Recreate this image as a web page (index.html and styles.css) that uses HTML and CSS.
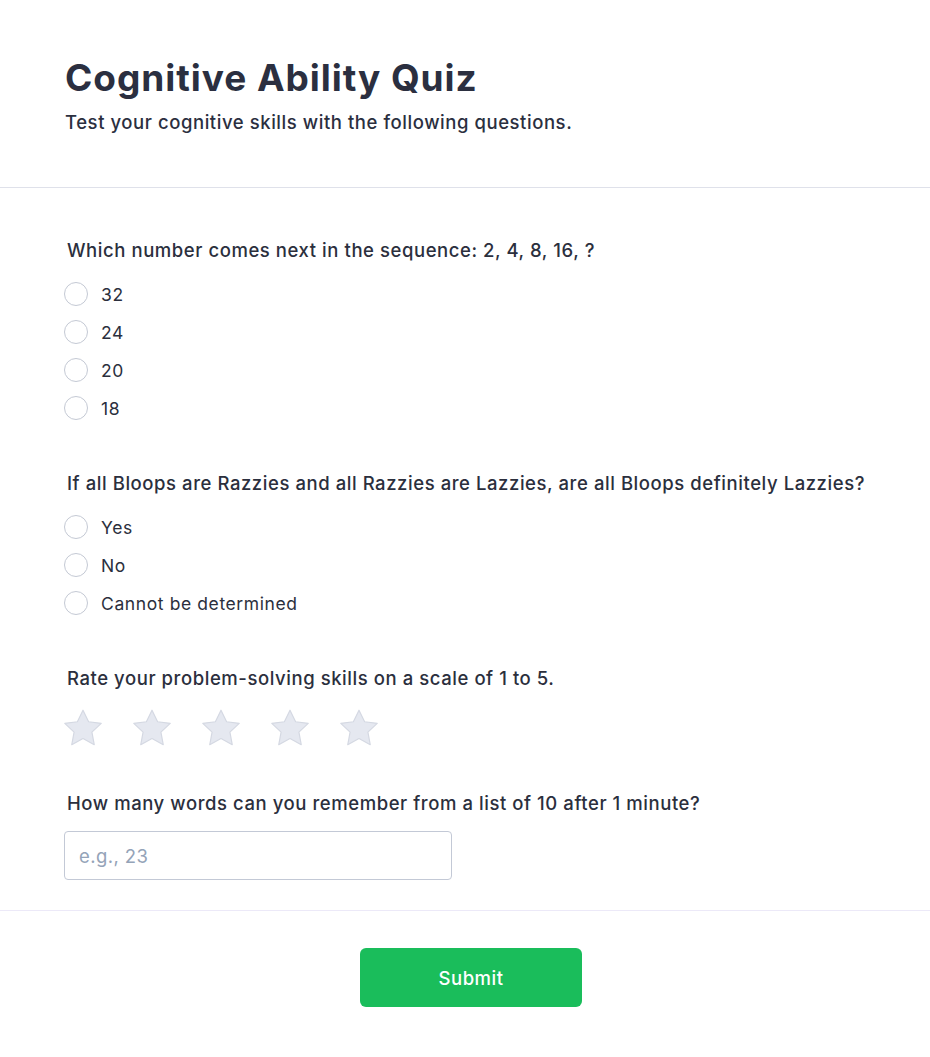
FILE: index.html
```html
<!DOCTYPE html>
<html lang="en">
<head>
<meta charset="utf-8">
<title>Cognitive Ability Quiz</title>
<link rel="stylesheet" href="styles.css">
</head>
<body>
<div class="page">
  <header class="header">
    <h1 class="title">Cognitive Ability Quiz</h1>
    <p class="subtitle">Test your cognitive skills with the following questions.</p>
  </header>

  <form class="form">
    <section class="question">
      <p class="q-text">Which number comes next in the sequence: 2, 4, 8, 16, ?</p>
      <div class="options">
        <label class="option"><span class="radio"></span><span class="opt-label">32</span></label>
        <label class="option"><span class="radio"></span><span class="opt-label">24</span></label>
        <label class="option"><span class="radio"></span><span class="opt-label">20</span></label>
        <label class="option"><span class="radio"></span><span class="opt-label">18</span></label>
      </div>
    </section>

    <section class="question">
      <p class="q-text">If all Bloops are Razzies and all Razzies are Lazzies, are all Bloops definitely Lazzies?</p>
      <div class="options">
        <label class="option"><span class="radio"></span><span class="opt-label">Yes</span></label>
        <label class="option"><span class="radio"></span><span class="opt-label">No</span></label>
        <label class="option"><span class="radio"></span><span class="opt-label">Cannot be determined</span></label>
      </div>
    </section>

    <section class="question">
      <p class="q-text">Rate your problem-solving skills on a scale of 1 to 5.</p>
      <div class="stars">
        <svg class="star" viewBox="2.2 2 19.6 19.6"><path d="M12 2.6l2.9 6 6.5.8-4.8 4.5 1.2 6.5L12 17.2l-5.8 3.2 1.2-6.5-4.8-4.5 6.5-.8z"/></svg>
        <svg class="star" viewBox="2.2 2 19.6 19.6"><path d="M12 2.6l2.9 6 6.5.8-4.8 4.5 1.2 6.5L12 17.2l-5.8 3.2 1.2-6.5-4.8-4.5 6.5-.8z"/></svg>
        <svg class="star" viewBox="2.2 2 19.6 19.6"><path d="M12 2.6l2.9 6 6.5.8-4.8 4.5 1.2 6.5L12 17.2l-5.8 3.2 1.2-6.5-4.8-4.5 6.5-.8z"/></svg>
        <svg class="star" viewBox="2.2 2 19.6 19.6"><path d="M12 2.6l2.9 6 6.5.8-4.8 4.5 1.2 6.5L12 17.2l-5.8 3.2 1.2-6.5-4.8-4.5 6.5-.8z"/></svg>
        <svg class="star" viewBox="2.2 2 19.6 19.6"><path d="M12 2.6l2.9 6 6.5.8-4.8 4.5 1.2 6.5L12 17.2l-5.8 3.2 1.2-6.5-4.8-4.5 6.5-.8z"/></svg>
      </div>
    </section>

    <section class="question last">
      <p class="q-text">How many words can you remember from a list of 10 after 1 minute?</p>
      <input class="text-input" type="text" placeholder="e.g., 23">
    </section>
  </form>

  <footer class="footer">
    <button class="submit" type="button">Submit</button>
  </footer>
</div>
</body>
</html>
```

FILE: styles.css
```css
* { box-sizing: border-box; }

html, body {
  margin: 0;
  padding: 0;
  background: #ffffff;
}

body {
  font-family: Inter, "Noto Sans", "Liberation Sans", sans-serif;
  color: #2d3142;
}

.page {
  width: 930px;
}

.header {
  padding: 56px 65px 51px;
  border-bottom: 1px solid #dfe1ea;
}

.title {
  margin: 0;
  font-size: 37px;
  line-height: 43px;
  font-weight: 700;
  letter-spacing: 0.95px;
  color: #2b2f40;
}

.subtitle {
  margin: 10px 0 0;
  font-size: 18.5px;
  line-height: 27px;
  font-weight: 500;
  letter-spacing: 0.56px;
  color: #2b2f40;
}

.form {
  padding: 49px 20px 30px 64px;
}

.question {
  margin-bottom: 43px;
}

.question.last {
  margin-bottom: 0;
}

.q-text {
  margin: 0 0 11px 3px;
  font-size: 18.5px;
  line-height: 27px;
  font-weight: 500;
  letter-spacing: 0.56px;
  white-space: nowrap;
  color: #2b2f3d;
}

.options {
  display: flex;
  flex-direction: column;
}

.option {
  display: flex;
  align-items: center;
  height: 38px;
  gap: 13px;
}

.radio {
  width: 24px;
  height: 24px;
  border-radius: 50%;
  border: 1.5px solid #c4c9d4;
  background: #fff;
  flex: none;
}

.opt-label {
  font-size: 17.5px;
  font-weight: 400;
  letter-spacing: 0.6px;
  color: #2b2f3d;
}

.stars {
  display: flex;
  gap: 31px;
  margin-top: 17px;
}

.star {
  width: 38px;
  height: 38px;
  display: block;
}

.star path {
  fill: #e5e8f0;
  stroke: #d4d8e2;
  stroke-width: 0.6;
  stroke-linejoin: round;
}

.text-input {
  display: block;
  margin-top: 14px;
  width: 388px;
  height: 49px;
  border: 1px solid #c3c9d6;
  border-radius: 4px;
  padding: 0 14px;
  font-family: inherit;
  font-size: 18.5px;
  letter-spacing: 0.4px;
  color: #2b2f3d;
  background: #fff;
  outline: none;
}

.text-input::placeholder {
  color: #94a3b8;
}

.footer {
  border-top: 1px solid #ece9f8;
  display: flex;
  justify-content: center;
  padding: 37px 0 50px 12px;
}

.submit {
  width: 222px;
  height: 59px;
  border: none;
  border-radius: 6px;
  background: #1abd5b;
  color: #ffffff;
  font-family: inherit;
  font-size: 18.5px;
  font-weight: 500;
  letter-spacing: 0.5px;
  cursor: pointer;
}
```
